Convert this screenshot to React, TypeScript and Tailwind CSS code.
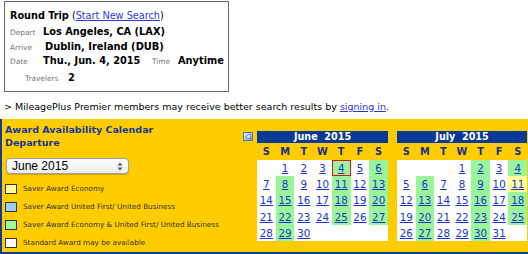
import React from "react";

const F = { fontFamily: '"DejaVu Sans", Verdana, sans-serif' };

type CalProps = {
  title: string;
  offset: number;
  days: number;
  green: number[];
  yellow?: number[];
  red?: number[];
  width: string;
};

function Calendar({ title, offset, days, green, yellow = [], red = [], width }: CalProps) {
  const cells: (number | null)[] = [];
  for (let i = 0; i < 35; i++) {
    const d = i - offset + 1;
    cells.push(d >= 1 && d <= days ? d : null);
  }
  return (
    <div className={`${width} flex flex-col`}>
      <div className="h-[12px] bg-[#063a96] text-white font-bold text-[9.6px] leading-[12px] text-center whitespace-pre">
        {title}
      </div>
      <div className="h-[17px] grid grid-cols-7 text-[#1c2f86] font-bold text-[9.8px] leading-[17px] text-center">
        {["S", "M", "T", "W", "T", "F", "S"].map((d, i) => (
          <div key={i}>{d}</div>
        ))}
      </div>
      <div className="grid grid-cols-7 bg-white">
        {cells.map((d, i) => {
          let bg = "bg-white";
          if (d && green.includes(d)) bg = "bg-[#9af59a]";
          if (d && yellow.includes(d)) bg = "bg-[#ffff9e]";
          const isRed = d && red.includes(d);
          return (
            <div
              key={i}
              className={`h-[16.2px] flex items-center justify-center ${bg} ${isRed ? "ring-1 ring-inset ring-[#e0101a]" : ""}`}
            >
              {d ? (
                <span className="text-[#1a34c8] underline text-[10.3px] leading-[12px]">{d}</span>
              ) : null}
            </div>
          );
        })}
      </div>
    </div>
  );
}

export default function App() {
  return (
    <div className="w-[528px] h-[254px] bg-white overflow-hidden relative" style={F}>
      {/* Summary box */}
      <div className="ml-[4px] mt-[1px] w-[225px] h-[91px] border border-[#6a6a6a] pl-[5px] pt-[6px] text-black">
        <div className="h-[16px] leading-[15px] text-[9.7px] whitespace-nowrap">
          <span className="font-bold">Round Trip</span>{" "}
          <span>
            (<span className="text-[#3038d8] underline">Start New Search</span>)
          </span>
        </div>
        <div className="h-[15px] leading-[15px] whitespace-nowrap flex items-baseline">
          <span className="w-[33px] text-[7.4px] text-[#777]">Depart</span>
          <span className="font-bold text-[9.8px]">Los Angeles, CA (LAX)</span>
        </div>
        <div className="h-[14px] leading-[15px] whitespace-nowrap flex items-baseline">
          <span className="w-[35px] text-[7.4px] text-[#777]">Arrive</span>
          <span className="font-bold text-[9.9px]">Dublin, Ireland (DUB)</span>
        </div>
        <div className="h-[17px] leading-[15px] whitespace-nowrap flex items-baseline">
          <span className="w-[33px] text-[7.4px] text-[#777]">Date</span>
          <span className="font-bold text-[9.8px] w-[109px]">Thu., Jun. 4, 2015</span>
          <span className="w-[26px] text-[7.4px] text-[#777]">Time</span>
          <span className="font-bold text-[9.8px]">Anytime</span>
        </div>
        <div className="h-[15px] leading-[15px] whitespace-nowrap flex items-baseline pl-[15px]">
          <span className="w-[43px] text-[7.4px] text-[#777]">Travelers</span>
          <span className="font-bold text-[9.8px]">2</span>
        </div>
      </div>

      {/* Info line */}
      <div className="h-[27px] pl-[4px] pt-[9px] text-[9.5px] leading-[11px] text-black whitespace-nowrap">
        &gt; MileagePlus Premier members may receive better search results by{" "}
        <span className="text-[#2a35d0] underline">signing in</span>.
      </div>

      {/* Award panel */}
      <div className="h-[135px] bg-[#ffcc00] border-l-2 border-b-2 border-[#123c8c] flex">
        <div className="w-[241px] pl-[3px] pt-[4px] flex flex-col">
          <div className="text-[#17359a] font-bold text-[9.5px] leading-[13px]">
            <div>Award Availability Calendar</div>
            <div>Departure</div>
          </div>
          <div
            className="mt-[9px] ml-[1px] w-[123px] h-[17px] rounded-[4px] border border-[#a0a0a0] bg-gradient-to-b from-white to-[#ececec] shadow-[0_1px_1px_rgba(0,0,0,0.2)] flex items-center justify-between pl-[5px] pr-[5px]"
            style={{ fontFamily: '"Liberation Sans", Arial, sans-serif' }}
          >
            <span className="text-[12px] leading-[14px] text-black">June 2015</span>
            <svg width="6" height="9" viewBox="0 0 6 9">
              <path d="M3 0.5 L5.5 3.5 L0.5 3.5 Z" fill="#555" />
              <path d="M3 8.5 L5.5 5.5 L0.5 5.5 Z" fill="#555" />
            </svg>
          </div>
          <div className="mt-[6px] flex flex-col text-[7.25px] text-[#333] ">
            {[
              ["bg-[#ffff99]", "Saver Award Economy"],
              ["bg-[#99ccff]", "Saver Award United First/ United Business"],
              ["bg-[#99ff99]", "Saver Award Economy & United First/ United Business"],
              ["bg-white", "Standard Award may be available"],
            ].map(([c, t]) => (
              <div key={t} className="h-[18px] flex items-center gap-[6px] whitespace-nowrap">
                <div className={`w-[12px] h-[10px] border border-[#333] ${c}`} />
                <span className="leading-[10px]">{t}</span>
              </div>
            ))}
          </div>
        </div>

        <div className="pt-[13px]">
          <svg width="10" height="9" viewBox="0 0 10 9">
            <defs>
              <linearGradient id="g1" x1="0" y1="0" x2="1" y2="1">
                <stop offset="0" stopColor="#f4f8ff" />
                <stop offset="1" stopColor="#5f8fd0" />
              </linearGradient>
            </defs>
            <rect x="0.5" y="0.5" width="9" height="8" fill="url(#g1)" stroke="#4f78b8" />
            <path d="M2.5 4.5 L7 2 L7 7 Z" fill="#fff" stroke="#2f5fae" strokeWidth="0.6" />
          </svg>
        </div>

        <div className="pl-[4px] pt-[12px] flex gap-[9px]">
          <Calendar
            title={"June  2015"}
            offset={1}
            days={30}
            green={[4, 6, 8, 11, 13, 15, 18, 20, 22, 25, 27, 29]}
            red={[4]}
            width="w-[131px]"
          />
          <Calendar
            title={"July  2015"}
            offset={3}
            days={31}
            green={[2, 4, 6, 9, 13, 16, 18, 20, 23, 25, 27, 30]}
            yellow={[11]}
            width="w-[130px]"
          />
        </div>
      </div>
    </div>
  );
}
